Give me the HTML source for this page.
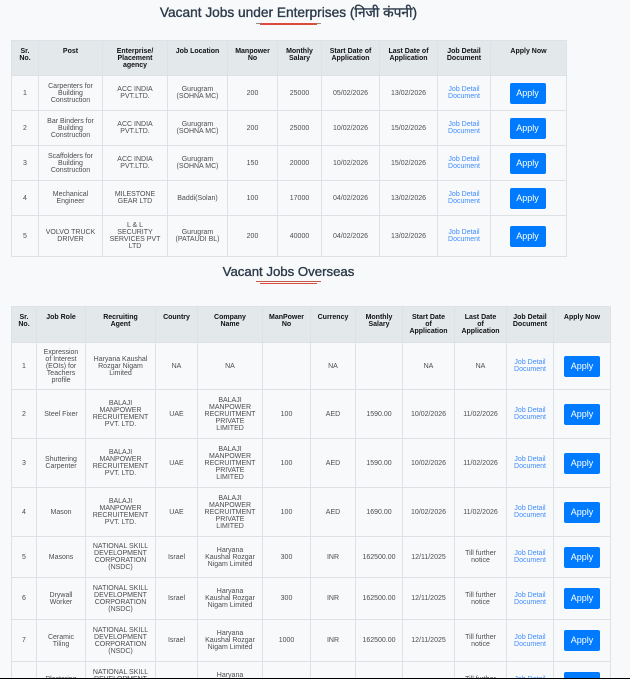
<!DOCTYPE html>
<html lang="en">
<head>
<meta charset="utf-8">
<title>Vacant Jobs</title>
<style>
html,body{margin:0;padding:0;background:#f8f9fa;width:630px;height:679px;overflow:hidden;}
#w{position:absolute;left:0;top:0;width:630px;height:679px;overflow:hidden;font-family:"Liberation Sans","Noto Sans CJK SC",sans-serif;background:#f8f9fa;}
#c{position:absolute;left:0;top:0;width:630px;height:679px;overflow:hidden;filter:blur(.25px);}
h2{position:absolute;left:0;width:577px;margin:0;text-align:center;color:#2b3a4a;font-weight:400;font-size:13.2px;line-height:18px;white-space:nowrap;-webkit-text-stroke:.35px #2b3a4a;}
.ln{position:absolute;}
table{position:absolute;left:11px;border-collapse:collapse;table-layout:fixed;font-size:7px;line-height:7px;color:#4d4d4d;}
td,th{border:1px solid #dee2e6;padding:0;text-align:center;vertical-align:middle;overflow:hidden;}
th{background:#e3e8eb;color:#111;font-weight:700;vertical-align:top;padding-top:7px;box-sizing:border-box;}
a{color:#3f8cff;text-decoration:none;}
.b{display:inline-block;width:36px;height:21px;line-height:20px;background:#007bff;color:#fff;border-radius:2px;font-size:9px;vertical-align:middle;}
.t1 .b{position:relative;left:-1px;}
#bar{position:absolute;left:0;top:678px;width:630px;height:1px;background:#000;}
</style>
</head>
<body>
<div id="w">
<div id="c">
<h2 style="top:4px;font-size:13.7px;">Vacant Jobs under Enterprises (निजी कंपनी)</h2>
<div class="ln" style="left:256px;top:23px;width:65px;height:1px;background:#8a8f94;"></div>
<div class="ln" style="left:260px;top:23px;width:57px;height:2px;background:#dc4c3c;"></div>

<table class="t1" style="top:40px;width:555px;">
<colgroup><col style="width:27px"><col style="width:64px"><col style="width:65px"><col style="width:60px"><col style="width:50px"><col style="width:44px"><col style="width:58px"><col style="width:58px"><col style="width:53px"><col style="width:76px"></colgroup>
<tr style="height:35px"><th>Sr.<br>No.</th><th>Post</th><th>Enterprise/<br>Placement<br>agency</th><th>Job Location</th><th>Manpower<br>No</th><th>Monthly<br>Salary</th><th>Start Date of<br>Application</th><th>Last Date of<br>Application</th><th>Job Detail<br>Document</th><th>Apply Now</th></tr>
<tr style="height:35px"><td>1</td><td>Carpenters for<br>Building<br>Construction</td><td>ACC INDIA<br>PVT.LTD.</td><td>Gurugram<br>(SOHNA MC)</td><td>200</td><td>25000</td><td>05/02/2026</td><td>13/02/2026</td><td><a>Job Detail<br>Document</a></td><td><span class="b">Apply</span></td></tr>
<tr style="height:35px"><td>2</td><td>Bar Binders for<br>Building<br>Construction</td><td>ACC INDIA<br>PVT.LTD.</td><td>Gurugram<br>(SOHNA MC)</td><td>200</td><td>25000</td><td>10/02/2026</td><td>15/02/2026</td><td><a>Job Detail<br>Document</a></td><td><span class="b">Apply</span></td></tr>
<tr style="height:35px"><td>3</td><td>Scaffolders for<br>Building<br>Construction</td><td>ACC INDIA<br>PVT.LTD.</td><td>Gurugram<br>(SOHNA MC)</td><td>150</td><td>20000</td><td>10/02/2026</td><td>15/02/2026</td><td><a>Job Detail<br>Document</a></td><td><span class="b">Apply</span></td></tr>
<tr style="height:35px"><td>4</td><td>Mechanical<br>Engineer</td><td>MILESTONE<br>GEAR LTD</td><td>Baddi(Solan)</td><td>100</td><td>17000</td><td>04/02/2026</td><td>13/02/2026</td><td><a>Job Detail<br>Document</a></td><td><span class="b">Apply</span></td></tr>
<tr style="height:41px"><td>5</td><td>VOLVO TRUCK<br>DRIVER</td><td>L &amp; L<br>SECURITY<br>SERVICES PVT<br>LTD</td><td>Gurugram<br>(PATAUDI BL)</td><td>200</td><td>40000</td><td>04/02/2026</td><td>13/02/2026</td><td><a>Job Detail<br>Document</a></td><td><span class="b">Apply</span></td></tr>
</table>

<h2 style="top:263px;">Vacant Jobs Overseas</h2>
<div class="ln" style="left:256px;top:281px;width:65px;height:1px;background:#c0584c;"></div>
<div class="ln" style="left:260px;top:283px;width:57px;height:1px;background:#dc4c3c;"></div>

<table style="top:306px;width:599px;">
<colgroup><col style="width:25px"><col style="width:49px"><col style="width:70px"><col style="width:42px"><col style="width:65px"><col style="width:48px"><col style="width:45px"><col style="width:47px"><col style="width:52px"><col style="width:52px"><col style="width:47px"><col style="width:57px"></colgroup>
<tr style="height:36px"><th>Sr.<br>No.</th><th>Job Role</th><th>Recruiting<br>Agent</th><th>Country</th><th>Company<br>Name</th><th>ManPower<br>No</th><th>Currency</th><th>Monthly<br>Salary</th><th>Start Date<br>of<br>Application</th><th>Last Date<br>of<br>Application</th><th>Job Detail<br>Document</th><th>Apply Now</th></tr>
<tr style="height:47px"><td>1</td><td>Expression<br>of Interest<br>(EOIs) for<br>Teachers<br>profile</td><td>Haryana Kaushal<br>Rozgar Nigam<br>Limited</td><td>NA</td><td>NA</td><td></td><td>NA</td><td></td><td>NA</td><td>NA</td><td><a>Job Detail<br>Document</a></td><td><span class="b">Apply</span></td></tr>
<tr style="height:49px"><td>2</td><td>Steel Fixer</td><td>BALAJI<br>MANPOWER<br>RECRUITEMENT<br>PVT. LTD.</td><td>UAE</td><td>BALAJI<br>MANPOWER<br>RECRUITMENT<br>PRIVATE<br>LIMITED</td><td>100</td><td>AED</td><td>1590.00</td><td>10/02/2026</td><td>11/02/2026</td><td><a>Job Detail<br>Document</a></td><td><span class="b">Apply</span></td></tr>
<tr style="height:49px"><td>3</td><td>Shuttering<br>Carpenter</td><td>BALAJI<br>MANPOWER<br>RECRUITEMENT<br>PVT. LTD.</td><td>UAE</td><td>BALAJI<br>MANPOWER<br>RECRUITMENT<br>PRIVATE<br>LIMITED</td><td>100</td><td>AED</td><td>1590.00</td><td>10/02/2026</td><td>11/02/2026</td><td><a>Job Detail<br>Document</a></td><td><span class="b">Apply</span></td></tr>
<tr style="height:49px"><td>4</td><td>Mason</td><td>BALAJI<br>MANPOWER<br>RECRUITEMENT<br>PVT. LTD.</td><td>UAE</td><td>BALAJI<br>MANPOWER<br>RECRUITMENT<br>PRIVATE<br>LIMITED</td><td>100</td><td>AED</td><td>1690.00</td><td>10/02/2026</td><td>11/02/2026</td><td><a>Job Detail<br>Document</a></td><td><span class="b">Apply</span></td></tr>
<tr style="height:41px"><td>5</td><td>Masons</td><td>NATIONAL SKILL<br>DEVELOPMENT<br>CORPORATION<br>(NSDC)</td><td>Israel</td><td>Haryana<br>Kaushal Rozgar<br>Nigam Limited</td><td>300</td><td>INR</td><td>162500.00</td><td>12/11/2025</td><td>Till further<br>notice</td><td><a>Job Detail<br>Document</a></td><td><span class="b">Apply</span></td></tr>
<tr style="height:42px"><td>6</td><td>Drywall<br>Worker</td><td>NATIONAL SKILL<br>DEVELOPMENT<br>CORPORATION<br>(NSDC)</td><td>Israel</td><td>Haryana<br>Kaushal Rozgar<br>Nigam Limited</td><td>300</td><td>INR</td><td>162500.00</td><td>12/11/2025</td><td>Till further<br>notice</td><td><a>Job Detail<br>Document</a></td><td><span class="b">Apply</span></td></tr>
<tr style="height:42px"><td>7</td><td>Ceramic<br>Tiling</td><td>NATIONAL SKILL<br>DEVELOPMENT<br>CORPORATION<br>(NSDC)</td><td>Israel</td><td>Haryana<br>Kaushal Rozgar<br>Nigam Limited</td><td>1000</td><td>INR</td><td>162500.00</td><td>12/11/2025</td><td>Till further<br>notice</td><td><a>Job Detail<br>Document</a></td><td><span class="b">Apply</span></td></tr>
<tr style="height:42px"><td>8</td><td>Plastering<br>Worker</td><td>NATIONAL SKILL<br>DEVELOPMENT<br>CORPORATION<br>(NSDC)</td><td>Israel</td><td>Haryana<br>Kaushal Rozgar<br>Nigam Limited</td><td>1000</td><td>INR</td><td>162500.00</td><td>12/11/2025</td><td>Till further<br>notice</td><td><a>Job Detail<br>Document</a></td><td><span class="b">Apply</span></td></tr>
</table>
</div>
<div id="bar"></div>
</div>
</body>
</html>
